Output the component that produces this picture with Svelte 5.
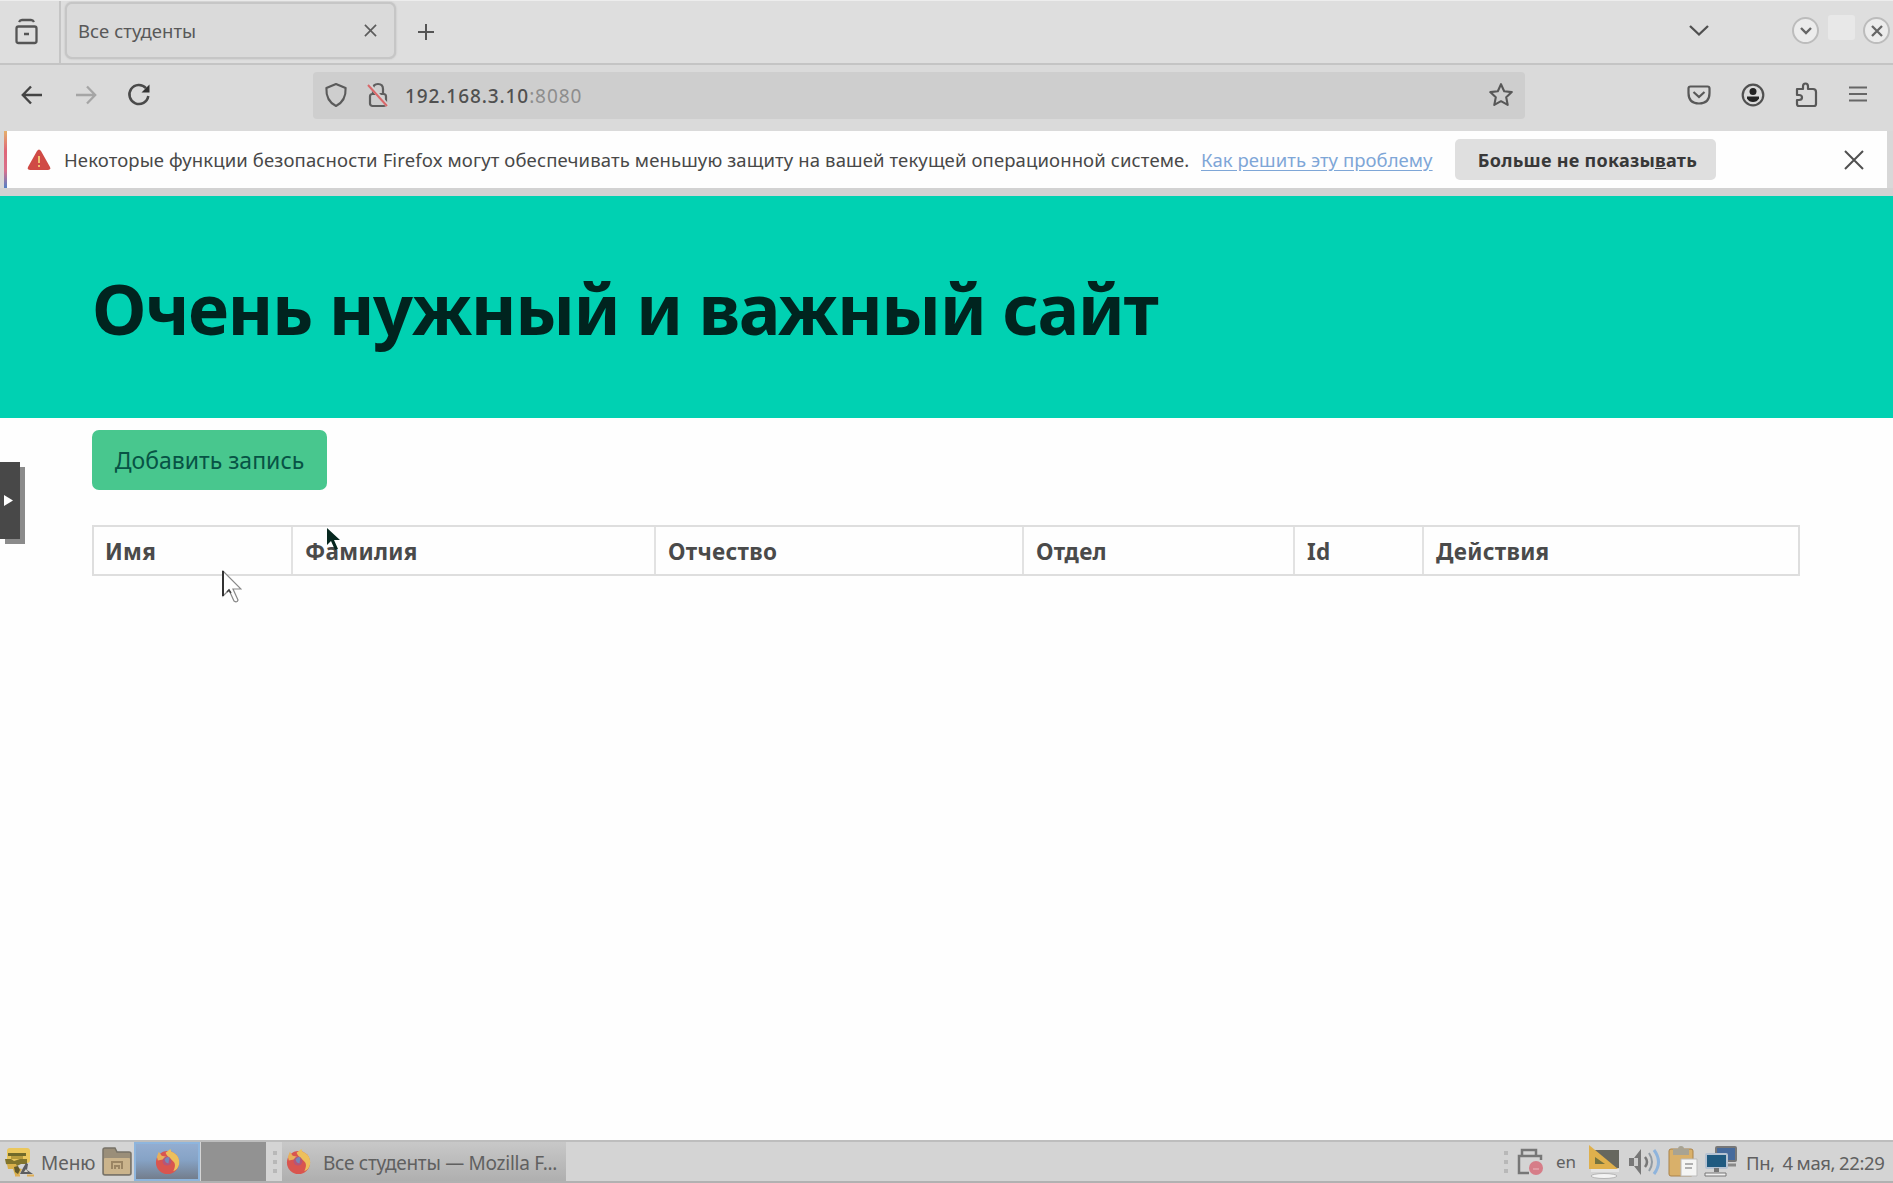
<script>
  const columns = ['Имя', 'Фамилия', 'Отчество', 'Отдел', 'Id', 'Действия'];
</script>

{#snippet firefox()}
  <svg class="fx" viewBox="0 0 28 28">
    <circle cx="14" cy="15" r="12" fill="#d9554f" />
    <path d="M12 5 17 1l1 3c6 2 9 7 8 13-1 4-3 6-6 7 2-4 3-8-1-11-2-2-4-2-7-8Z" fill="#edc05c" />
    <path d="M3 9l2-5 3 4 5 1-4 3-5 1Z" fill="#e8b05c" />
    <circle cx="13.5" cy="13.5" r="4.6" fill="#b65578" />
    <path d="M11 12q2-4 5-2l-1 6q-3 0-4-4" fill="#7988b6" />
  </svg>
{/snippet}

<div class="screen">
  <div class="tabs">
    <div class="view">
      <svg width="28" height="30" viewBox="0 0 28 30" fill="none" stroke="#555" stroke-width="2.3">
        <rect x="3.500" y="9.500" width="20" height="16.500" rx="2" /><path d="M6 5q1-2 3-2h9q2 0 3 2M11 17h5" />
      </svg>
    </div>
    <div class="tab">
      <span class="tab-title">Все студенты</span>
      <svg width="13" height="13" viewBox="0 0 14 14" stroke="#5c5c5c" stroke-width="1.8"><path d="M1 1l12 12M13 1 1 13" /></svg>
    </div>
    <svg class="plus" width="20" height="20" viewBox="0 0 20 20" stroke="#555" stroke-width="2"><path d="M10 2v16M2 10h16" /></svg>
    <svg class="chev" width="22" height="14" viewBox="0 0 22 14" fill="none" stroke="#505050" stroke-width="2.3"><path d="m2 2 9 8.500 9-8.500" /></svg>
    <div class="round"><svg width="12" height="8" viewBox="0 0 12 8" fill="none" stroke="#666" stroke-width="2.4"><path d="m1 1 5 5 5-5" /></svg></div>
    <div class="blank"></div>
    <div class="round"><svg width="12" height="12" viewBox="0 0 12 12" stroke="#666" stroke-width="2.3"><path d="m1 1 10 10M11 1 1 11" /></svg></div>
  </div>

  <div class="toolbar">
    <svg class="back" width="22" height="20" viewBox="0 0 22 20" fill="none" stroke="#444" stroke-width="2.4"><path d="M21 10H2M10 1.500 1.800 10l8.200 8.500" /></svg>
    <svg class="fwd" width="22" height="20" viewBox="0 0 22 20" fill="none" stroke="#a5a5a5" stroke-width="2.3"><path d="M1 10h19M12 1.500l8.200 8.500-8.200 8.500" /></svg>
    <svg class="reload" width="26" height="26" viewBox="0 0 26 26" fill="none" stroke="#4a4a4a" stroke-width="2.5"><path d="M20 6.200A9.500 9.500 0 1 0 22.300 14" /><path d="M23.500 2.500v8H15.500z" fill="#333" stroke="none" /></svg>
    <div class="url">
      <svg class="shield" width="24" height="26" viewBox="0 0 24 26" fill="none" stroke="#5a5a5a" stroke-width="2.1"><path d="M12 2 2.400 6C2 14 4 20 12 24c8-4 10-10 9.600-18Z" stroke-linejoin="round" /></svg>
      <svg class="lock" width="24" height="28" viewBox="0 0 24 28" fill="none" stroke="#5e5e5e" stroke-width="2.2"><rect x="4" y="13" width="16" height="12" rx="2.500" /><path d="M7 13V8q0-5 5-5t5 5v5" /><path d="M3 3.500 22 25" stroke="#d3d3d3" stroke-width="4" /><path d="M2 4 21 25" stroke="#d9686a" stroke-width="2" /></svg>
      <span class="host">192.168.3.10<i>:8080</i></span>
      <svg class="star" width="26" height="26" viewBox="0 0 26 26" fill="none" stroke="#585858" stroke-width="2.1" stroke-linejoin="round"><path d="m13 2.200 3.200 7 7.600.9-5.600 5.200 1.500 7.600L13 19.200l-6.700 3.700 1.500-7.600-5.600-5.200 7.600-.9Z" /></svg>
    </div>
    <div class="actions">
      <svg width="26" height="26" viewBox="0 0 26 26" fill="none" stroke="#585858" stroke-width="2.2"><path d="M4.500 4.500h17q2 0 2 2v4.500q0 10.500-10.500 10.500T2.500 11V6.500q0-2 2-2Z" /><path d="m7.500 10 5.500 5 5.500-5" /></svg>
      <svg width="26" height="26" viewBox="0 0 26 26" fill="none" stroke="#505050" stroke-width="2.200"><circle cx="13" cy="13" r="10.300" /><g fill="#222" stroke="none"><circle cx="13" cy="9.500" r="3.500" /><path d="M7 14.500h12v2q-2 3.500-6 3.500t-6-3.500Z" /></g></svg>
      <svg width="26" height="28" viewBox="0 0 26 28" fill="none" stroke="#585858" stroke-width="2.200" stroke-linejoin="round"><path d="M3 8h6V5.500q0-3 2.500-3T14 5.500V8h5q3 0 3 3v12q0 2-2 2H5q-2 0-2-2v-4h2q3 0 3-2.500T5 14H3Z" /></svg>
      <svg class="burger" width="20" height="18" viewBox="0 0 20 18" stroke="#666" stroke-width="2"><path d="M1 2.500h18M1 9h18M1 15.500h18" /></svg>
    </div>
  </div>

  <div class="notice">
    <div class="stripe"></div>
    <svg class="warn" width="24" height="22" viewBox="0 0 24 22"><path d="M10 2q2-3 4 0l9 16q1 3-2 3H3q-3 0-2-3Z" fill="#d04a45" /><path d="M12 7v7M12 16v2" stroke="#f0c070" stroke-width="2" /></svg>
    <span class="msg">Некоторые функции безопасности Firefox могут обеспечивать меньшую защиту на вашей текущей операционной системе.</span>
    <span class="link">Как решить эту проблему</span>
    <div class="dismiss"><span>Больше не показы<u>в</u>ать</span></div>
    <svg class="close" width="20" height="20" viewBox="0 0 20 20" stroke="#505050" stroke-width="2"><path d="m1 1 18 18M19 1 1 19" /></svg>
  </div>

  <main>
    <section class="hero"><h1>Очень нужный и важный сайт</h1></section>
    <div class="content">
      <button><span>Добавить запись</span></button>
      <div class="table">
        {#each columns as c}<div class="cell"><span>{c}</span></div>{/each}
      </div>
    </div>
    <div class="handle"><svg width="9" height="11" viewBox="0 0 9 11"><path d="M0 0 9 5.500 0 11Z" fill="#fff" /></svg></div>
  </main>

  <div class="taskbar">
    <svg class="menu-icon" width="30" height="30" viewBox="0 0 30 30"><rect x="3" y="1" width="23" height="15" rx="3" fill="#ebc75c" /><path d="M4 6h18v3H4z" fill="#716a2a" /><path d="M7 9h12v3H7z" fill="#b79b3c" /><path d="M1 12h6l3 2 6-2h7v5h-6l-4 2H7l-5-2Z" fill="#81742c" /><path d="M3 17h9l2 4 4 1-3 6h-4L9 22H4Z" fill="#d9b04a" /><path d="m10 20 4-1 2 4-2 4-3-2Z" fill="#63592c" /><path d="m16 27 3-6 3-5 2 1-1 6 6 4Z" fill="#5c5d60" /><path d="m20 25 2-3 2 3Z" fill="#d4d2cc" /><path d="M11 28.500h5M23 28.500h7" stroke="#dfae55" stroke-width="2" /></svg>
    <span class="menu-text">Меню</span>
    <svg class="folder" width="32" height="30" viewBox="0 0 32 30"><path d="M2 26V3q0-2 2-2h10l2 4h12q2 0 2 2v19q0 2-2 2H4q-2 0-2-2Z" fill="#9a8e79" stroke="#777267" stroke-width="1.500" /><rect x="3" y="11" width="26" height="16" rx="1" fill="#cbb48c" /><path d="M11 22v-7h10v7M14 22v-3h4v3" fill="none" stroke="#9b8563" stroke-width="2" /></svg>
    <div class="launch">{@render firefox()}</div>
    <div class="desk"></div>
    <div class="grip"><b></b><b></b><b></b></div>
    <div class="task">{@render firefox()}<span>Все студенты — Mozilla F...</span></div>
    <div class="tray">
      <div class="grip"><b></b><b></b><b></b></div>
      <svg class="printer" width="28" height="28" viewBox="0 0 28 28"><path d="M6 8V2h14v6" fill="none" stroke="#777" stroke-width="2.500" /><path d="M25 12V8H3v17h10" fill="none" stroke="#777" stroke-width="2.500" /><circle cx="20" cy="20" r="7" fill="#d67d88" /><path d="M17 21h6" stroke="#e29aa3" stroke-width="2" /></svg>
      <span class="lang">en</span>
      <svg class="ruler" width="34" height="34" viewBox="0 0 34 34"><path d="M6 5h26v18H4z" fill="#66675e" /><path d="M2 0v24h29Z" fill="#dfb04c" /><path d="M8 12v7h10Z" fill="#74733f" /><path d="M4 24h28v3H4z" fill="#e4e4e4" /><ellipse cx="17" cy="31" rx="13" ry="2.500" fill="#f3f3f3" stroke="#b5b5b5" /></svg>
      <svg class="sound" width="34" height="30" viewBox="0 0 34 30"><path d="M1 11h5l7-9v26l-7-9H1Z" fill="#777" /><path d="M6 11h4v8H6z" fill="#ccc" /><path d="M17 10q4 5 0 10" fill="none" stroke="#777" stroke-width="2.500" /><path d="M21 6q6 9 0 18" fill="none" stroke="#929ba3" stroke-width="2" /><path d="M26 3q9 12 0 24" fill="none" stroke="#8fb4dc" stroke-width="3" /></svg>
      <svg class="clip" width="32" height="32" viewBox="0 0 32 32"><rect x="2" y="3" width="24" height="27" rx="2" fill="#d9b06a" stroke="#a9824a" /><path d="M6 3h5q0-3 3-3t3 3h5v6H6z" fill="#a8a393" /><path d="M14 13h16v17H14z" fill="#f5f5f4" stroke="#bbb" /><path d="M18 18h8M18 22h7" stroke="#999" stroke-width="1.500" /></svg>
      <svg class="net" width="34" height="31" viewBox="0 0 34 31"><rect x="12" y="1" width="20" height="14" rx="1" fill="#466a9c" stroke="#777" stroke-width="2" /><path d="M22 19h10" stroke="#888" stroke-width="3" /><rect x="2" y="8" width="21" height="14" rx="1" fill="#1f5a80" stroke="#b5c2d2" stroke-width="2" /><path d="M10 22h5v4h-5z" fill="#777" /><path d="M1 27h21v3H1z" fill="#eee" stroke="#777" /></svg>
      <span class="clock">Пн,&nbsp; 4 мая, 22:29</span>
    </div>
  </div>

  <svg class="cursor dark" width="13" height="23" viewBox="0 0 13 23"><path d="M0 0v17l4-4 4 9 3-1-4-9h6Z" fill="#06271f" /></svg>
  <svg class="cursor light" width="20" height="34" viewBox="0 0 20 34"><path d="M1 1v25l6-6 5 11q3 2 4-1l-5-11h8Z" fill="#fff" stroke="#888" stroke-width="1.200" /><path d="M1 1v25" stroke="#333" stroke-width="2" /><path d="m5 22 2-2 2 3" fill="none" stroke="#444" stroke-width="1.500" /></svg>
</div>

<style>
  :global(body) { margin: 0; overflow: hidden; }
  .screen { position: relative; width: 1893px; height: 1183px; display: flex; flex-direction: column; background: #fefefe; font-family: "Noto Sans", sans-serif; color: #444; overflow: hidden; }
  .screen * { box-sizing: border-box; }
  span, h1 { white-space: nowrap; }
  svg { display: block; flex: none; }
  .tabs { height: 65px; flex: none; display: flex; align-items: center; background: #dedede; border-bottom: 2px solid #c4c4c4; border-top: 1px solid #ededed; }
  .view { width: 61px; height: 62px; border-right: 2px solid #c5c5c5; display: flex; align-items: center; padding-left: 13px; }
  .tab { width: 331px; height: 57px; margin: 0 1px 3px 4px; border: 2px solid #c6c6c6; border-radius: 7px; background: #dadada; box-shadow: 0 0 2px #bbb; display: flex; align-items: center; justify-content: space-between; padding: 0 17px 0 11px; }
  .tab-title { font-size: 18.500px; letter-spacing: .05px; color: #585858; }
  .plus { margin-left: 19px; }
  .chev { margin-left: 1252px; margin-right: 82px; margin-bottom: 2px; }
  .round { width: 27px; height: 27px; flex: none; margin-bottom: 3px; border: 2px solid #bcbcbc; border-radius: 50%; background: #ececec; display: flex; align-items: center; justify-content: center; }
  .blank { width: 27px; height: 25px; flex: none; margin: 0 8px 9px 9px; border-radius: 3px; background: #e8e8e8; }
  .toolbar { height: 66px; flex: none; display: flex; align-items: center; background: #dadada; padding: 0 25px 6px 21px; }
  .fwd { margin-left: 32px; }
  .reload { margin-left: 29px; }
  .url { width: 1212px; height: 47px; margin-left: 161px; background: #cecece; border-radius: 4px; display: flex; align-items: center; padding: 0 11px; }
  .lock { margin-left: 18px; }
  .host { margin-left: 15px; padding-top: 1px; font-size: 19px; letter-spacing: .9px; font-weight: 500; color: #505050; }
  .host i { font-style: normal; font-weight: 400; color: #8d8d8d; }
  .star { margin-left: auto; }
  .actions { flex: 1; display: flex; align-items: center; justify-content: flex-end; gap: 28px; }
  .burger { margin-bottom: 2px; }
  .notice { height: 57px; flex: none; display: flex; align-items: center; background: #fefefe; border-right: 6px solid #d8d8d8; border-left: 4px solid #d8d8d8; }
  .stripe { width: 3px; height: 100%; background: linear-gradient(#e4b06b, #df6678 35%, #d8718d 70%, #5280c6); }
  .warn { margin-left: 20px; }
  .msg { width: 1137px; flex: none; margin-left: 13px; font-size: 18.500px; letter-spacing: .12px; color: #484848; }
  .link { width: 254px; flex: none; font-size: 18.500px; letter-spacing: .06px; color: #7ea6d7; text-decoration: underline; text-underline-offset: 3px; }
  .dismiss { width: 261px; height: 41px; border-radius: 5px; background: #dfdfdf; display: flex; align-items: center; justify-content: center; padding-left: 4px; font-size: 18px; letter-spacing: .26px; font-weight: 700; color: #383838; }
  .close { margin-left: auto; margin-right: 23px; }
  main { position: relative; flex: 1; border-top: 8px solid #d2d2d2; }
  .hero { height: 222px; background: #00d1b2; display: flex; align-items: center; padding: 2px 0 0 92px; }
  h1 { margin: 0; font-size: 70px; line-height: 1; letter-spacing: -1.450px; font-weight: 700; color: #00241f; }
  .content { padding: 12px 0 0 92px; display: flex; flex-direction: column; align-items: flex-start; }
  button { width: 235px; height: 60px; padding: 0; border: 0; border-radius: 7px; background: #48c78e; color: #075345; font: 23px "Noto Sans", sans-serif; }
  .table { width: 1708px; height: 51px; margin-top: 35px; border: 2px solid #dedede; display: grid; grid-template-columns: 199px 363px 368px 271px 129px 1fr; }
  .cell { display: flex; align-items: center; padding: 1px 0 0 11px; font-size: 22.500px; letter-spacing: .3px; font-weight: 700; color: #4a4a4a; }
  .cell + .cell { border-left: 2px solid #e2e2e2; margin-left: -2px; padding-left: 12px; }
  .handle { position: absolute; left: 0; top: 266px; width: 20px; height: 77px; background: #484848; box-shadow: 5px 5px 0 #8b8b8b; display: flex; align-items: center; padding-left: 4px; }
  .taskbar { height: 43px; flex: none; display: flex; align-items: center; background: #d4d4d4; border-top: 2px solid #bdbdbd; border-bottom: 2px solid #b1b1b1; font-size: 19px; color: #606060; }
  .menu-icon { margin-left: 4px; }
  .menu-text { width: 60px; margin-left: 7px; padding-top: 2px; }
  .fx { width: 27px; height: 27px; }
  .launch { width: 66px; height: 39px; margin-left: 1px; background: linear-gradient(#93add0, #86a3c6 45%, #737d8c); border: 2px solid #8eb5dd; display: flex; align-items: center; justify-content: center; }
  .desk { width: 65px; height: 39px; margin-left: 1px; background: #929292; }
  .grip { width: 4px; display: flex; flex-direction: column; gap: 5px; }
  .grip b { width: 4px; height: 4px; background: #b8b8b8; }
  .taskbar > .grip { margin-left: 7px; }
  .task { width: 284px; height: 39px; margin-left: 5px; background: linear-gradient(#c8c8c8, #afafaf); display: flex; align-items: center; padding-left: 3px; }
  .task span { margin-left: 11px; padding-top: 2px; letter-spacing: -.27px; }
  .tray { margin-left: auto; display: flex; align-items: center; padding-right: 6px; }
  .printer { margin-left: 8px; }
  .lang { width: 31px; margin-left: 12px; font-size: 17px; }
  .sound { margin-left: 7px; }
  .clip { margin-left: 5px; }
  .net { margin-left: 5px; }
  .clock { width: 141px; margin-left: 8px; padding-top: 1px; font-size: 18.500px; letter-spacing: -.4px; word-spacing: -.5px; }
  .cursor { position: absolute; }
  .dark { left: 327px; top: 528px; }
  .light { left: 222px; top: 570px; }
</style>
